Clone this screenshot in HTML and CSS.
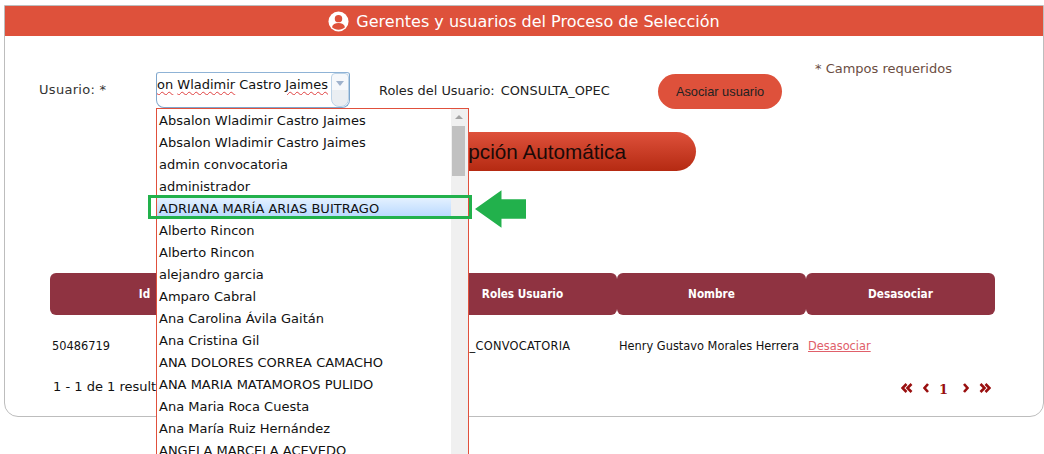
FILE: index.html
```html
<!DOCTYPE html>
<html lang="es">
<head>
<meta charset="utf-8">
<title>Gerentes y usuarios</title>
<link rel="stylesheet" href="styles.css">
</head>
<body>
<section class="panel">
  <h1 class="panel-title">
    <svg class="title-icon" viewBox="0 0 22 22" aria-hidden="true">
      <circle cx="11" cy="11" r="10.5" fill="#fff"/>
      <circle cx="11" cy="8" r="3.9" fill="#de513b"/>
      <path d="M4.2 17c.6-3 3.3-4.3 6.8-4.3s6.200 1.300 6.800 4.300c-1.700 1.700-4.100 2.600-6.800 2.600s-5.100-.9-6.800-2.600z" fill="#de513b"/>
    </svg>
    <span>Gerentes y usuarios del Proceso de Selección</span>
  </h1>

  <div class="form-row">
    <label class="user-label">Usuario: *</label>
    <div class="combo">
      <div class="combo-text"><span class="misspelt">Absalon</span> <span class="misspelt">Wladimir</span> Castro <span class="misspelt">Jaimes</span></div>
      <div class="combo-btn"><i class="combo-arrow"></i></div>
    </div>
    <div class="roles"><span>Roles del Usuario:</span> <span>CONSULTA_OPEC</span></div>
    <button class="btn-assoc" type="button">Asociar usuario</button>
    <div class="required">* Campos requeridos</div>
  </div>

  <div class="auto-row">
    <button class="btn-auto" type="button">Recepción Automática</button>
  </div>

  <div class="table-wrap">
    <div class="thead">
      <div class="th">Id</div>
      <div class="th">Usuario</div>
      <div class="th">Roles Usuario</div>
      <div class="th">Nombre</div>
      <div class="th">Desasociar</div>
    </div>
    <div class="trow">
      <div class="td">50486719</div>
      <div class="td">hmorales</div>
      <div class="td td-role">ADMIN_CONVOCATORIA</div>
      <div class="td">Henry Gustavo Morales Herrera</div>
      <div class="td"><a class="unlink" href="#">Desasociar</a></div>
    </div>
  </div>

  <div class="table-foot">
    <div class="count">1 - 1 de 1 resultados</div>
    <nav class="pager">
      <svg class="pg-icon dbl" viewBox="0 0 12 10" aria-hidden="true"><path d="M5.500 1 1.500 5l4 4M10.500 1l-4 4 4 4"/></svg>
      <svg class="pg-icon sgl" viewBox="0 0 6 10" aria-hidden="true"><path d="M5 1 1.500 5 5 9"/></svg>
      <b class="pg-num">1</b>
      <svg class="pg-icon sgl" viewBox="0 0 6 10" aria-hidden="true"><path d="M1 1l3.500 4L1 9"/></svg>
      <svg class="pg-icon dbl" viewBox="0 0 12 10" aria-hidden="true"><path d="M1.500 1l4 4-4 4M6.500 1l4 4-4 4"/></svg>
    </nav>
  </div>
</section>

<div class="listbox">
  <ul class="options">
    <li>Absalon Wladimir Castro Jaimes</li>
    <li>Absalon Wladimir Castro Jaimes</li>
    <li>admin convocatoria</li>
    <li>administrador</li>
    <li class="hover">ADRIANA MARÍA ARIAS BUITRAGO</li>
    <li>Alberto Rincon</li>
    <li>Alberto Rincon</li>
    <li>alejandro garcia</li>
    <li>Amparo Cabral</li>
    <li>Ana Carolina Ávila Gaitán</li>
    <li>Ana Cristina Gil</li>
    <li>ANA DOLORES CORREA CAMACHO</li>
    <li>ANA MARIA MATAMOROS PULIDO</li>
    <li>Ana Maria Roca Cuesta</li>
    <li>Ana María Ruiz Hernández</li>
    <li>ANGELA MARCELA ACEVEDO</li>
  </ul>
  <div class="scrollbar">
    <i class="sb-up"></i>
    <i class="sb-thumb"></i>
  </div>
</div>

<div class="mark-box"></div>
<svg class="mark-arrow" viewBox="0 0 52 38" aria-hidden="true">
  <path d="M0 19 27 0V9H52V29H27V38z" fill="#22b14c"/>
</svg>
</body>
</html>
```
FILE: styles.css
```css
* { box-sizing: border-box; }

html, body {
  margin: 0;
  height: 454px;
  overflow: hidden;
  background: #fff;
}

body {
  position: relative;
  padding: 5px 0 0 4px;
  font-family: "DejaVu Sans", Verdana, sans-serif;
  color: #111;
}

.panel {
  width: 1040px;
  height: 412px;
  border: 1px solid #bdbdbd;
  border-radius: 0 0 14px 14px;
}

.panel-title {
  display: flex;
  align-items: center;
  justify-content: center;
  gap: 7px;
  height: 30px;
  margin: 0;
  background: #de513b;
  color: #fff;
  font-size: 16px;
  font-weight: 400;
}

.title-icon { width: 21px; height: 21px; }

.form-row {
  display: flex;
  align-items: flex-start;
  height: 96px;
  padding: 36px 0 0 34px;
  font-size: 13px;
}

.user-label {
  width: 117px;
  padding-top: 10px;
  font-size: 13px;
  letter-spacing: .3px;
  color: #333;
}

.combo {
  display: flex;
  align-items: flex-start;
  width: 194px;
  height: 36px;
  border: 1px solid #7ea6cc;
  border-top-color: #8fb3d6;
  border-radius: 3px 3px 8px 8px;
  background: #fff;
  overflow: hidden;
}

.combo-text {
  display: flex;
  justify-content: flex-end;
  gap: 4px;
  flex: none;
  width: 171px;
  margin-top: 2px;
  overflow: hidden;
  white-space: nowrap;
  font-size: 13px;
  line-height: 20px;
}

.misspelt {
  flex: none;
  text-decoration: underline wavy #e04040 1px;
  text-underline-offset: 2px;
}

.combo-btn {
  display: flex;
  justify-content: center;
  flex: none;
  width: 18px;
  height: 34px;
  margin-left: 3px;
  padding-top: 7px;
  border: 1px solid #bcd2e6;
  border-radius: 4px 4px 8px 8px;
  background: linear-gradient(#f6f8fb 0 50%, #eaeef2 50% 100%);
}

.combo-arrow {
  width: 0;
  height: 0;
  border-left: 4px solid transparent;
  border-right: 4px solid transparent;
  border-top: 5px solid #9fb2cc;
}

.roles {
  display: flex;
  gap: 6px;
  width: 279px;
  margin-left: 29px;
  padding-top: 11px;
  font-size: 12.900px;
  color: #222;
}

.btn-assoc {
  width: 124px;
  height: 35px;
  margin-top: 2px;
  border: 0;
  border-radius: 18px;
  background: #de513b;
  color: #222;
  font-family: "Liberation Sans", Arial, sans-serif;
  font-size: 12.800px;
}

.required {
  margin: -11px 0 0 33px;
  font-size: 13px;
  color: #6b4d42;
}

.auto-row {
  height: 141px;
  padding-left: 352px;
}

.btn-auto {
  display: block;
  width: 339px;
  height: 39px;
  padding: 0 7px 0 0;
  border: 0;
  border-radius: 20px;
  background: linear-gradient(#de513b, #b52a12);
  color: #1a0a08;
  font-family: "Liberation Sans", Arial, sans-serif;
  font-size: 20.700px;
}

.table-wrap { width: 945px; margin-left: 45px; }

.thead {
  display: grid;
  grid-template-columns: repeat(5, 1fr);
  height: 42px;
}

.th {
  display: flex;
  align-items: center;
  justify-content: center;
  border-radius: 6px;
  background: #8f3341;
  color: #fff;
  font-family: "DejaVu Sans Condensed", "DejaVu Sans", sans-serif;
  font-size: 11.700px;
  font-weight: 700;
}

.trow {
  display: grid;
  grid-template-columns: repeat(5, 1fr);
  align-items: center;
  height: 60px;
  padding-top: 2px;
  font-size: 11.400px;
  color: #111;
}

.td { padding-left: 2px; white-space: nowrap; }
.td-role { letter-spacing: .25px; }

.unlink { color: #e0606a; }

.table-foot {
  display: flex;
  align-items: flex-start;
  justify-content: space-between;
  width: 938px;
  margin-left: 48px;
}

.count { padding-top: 4px; font-size: 13px; color: #111; }

.pager {
  display: flex;
  align-items: center;
  gap: 10px;
  padding-top: 2px;
}

.pg-icon {
  height: 10px;
  fill: none;
  stroke: #990f0f;
  stroke-width: 2.600;
}
.pg-icon.dbl { width: 12px; }
.pg-icon.sgl { width: 6px; }

.pg-num {
  margin-right: 5px;
  padding-top: 5px;
  font-family: "DejaVu Serif", serif;
  font-size: 13px;
  line-height: 16px;
  color: #990f0f;
}

.listbox {
  position: absolute;
  left: 156px;
  top: 108px;
  display: flex;
  width: 313px;
  height: 346px;
  border: 1px solid #e0503c;
  border-bottom: 0;
  background: #fff;
  overflow: hidden;
}

.options {
  flex: 1;
  margin: 0;
  padding: 0;
  list-style: none;
  font-size: 13px;
  color: #111;
}

.options li {
  height: 22px;
  padding-left: 2px;
  line-height: 24px;
  white-space: nowrap;
}

.options li.hover {
  background: linear-gradient(#e6f2ff, #b4d6ff);
}

.scrollbar {
  position: relative;
  flex: none;
  width: 17px;
  background: #f0f0f0;
}

.sb-up {
  position: absolute;
  left: 4px;
  top: 6px;
  border-left: 4px solid transparent;
  border-right: 4px solid transparent;
  border-bottom: 4px solid #a3a3a3;
}

.sb-thumb {
  position: absolute;
  left: 1px;
  top: 17px;
  width: 13px;
  height: 50px;
  background: #c1c1c1;
}

.mark-box {
  position: absolute;
  left: 148px;
  top: 195px;
  width: 324px;
  height: 24px;
  border: 3px solid #22b14c;
}

.mark-arrow {
  position: absolute;
  left: 475px;
  top: 190px;
  width: 51px;
  height: 38px;
}
```
